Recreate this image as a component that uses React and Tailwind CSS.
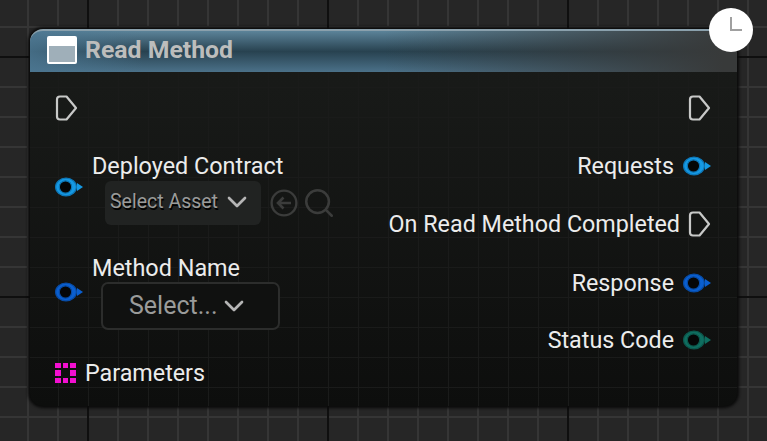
import { ChevronDown, Search } from "lucide-react";

function DataPin({ color, edge, hole = "#050606" }) {
  return (
    <svg width="28" height="20" viewBox="0 0 28 20" className="shrink-0">
      <ellipse cx="11" cy="10" rx="10.4" ry="8.9" fill={color} stroke={edge} strokeWidth="1.2" />
      <circle cx="10.5" cy="10" r="6.2" fill={hole} stroke={edge} strokeWidth="1.2" />
      <path d="M22 6 L28 10 L22 14 Z" fill={color} />
    </svg>
  );
}

function ExecPin() {
  return (
    <svg width="23" height="28" viewBox="0 0 23 28" className="shrink-0">
      <path
        d="M5 2.5 H11.5 L21 14 L11.5 25.5 H5 Q2 25.5 2 22.5 V5.5 Q2 2.5 5 2.5 Z"
        fill="none"
        stroke="#c8c9c8"
        strokeWidth="2.2"
        strokeLinejoin="round"
      />
    </svg>
  );
}

function ArrayPin() {
  const cells = [0, 1, 2, 3, 5, 6, 7, 8];
  return (
    <div className="grid grid-cols-3 grid-rows-3 gap-[2px] w-[21px] h-[21px] shrink-0">
      {[0, 1, 2, 3, 4, 5, 6, 7, 8].map((i) => (
        <div key={i} className={cells.includes(i) ? "bg-[#f20fd0]" : ""} />
      ))}
    </div>
  );
}

function BackIcon() {
  return (
    <svg width="28" height="28" viewBox="0 0 28 28" fill="none" stroke="#3b3c3b" strokeWidth="2.4">
      <circle cx="14" cy="14" r="12.4" />
      <path d="M21 14 H8 M13.5 8.5 L8 14 L13.5 19.5" strokeWidth="2.6" />
    </svg>
  );
}

function OutputRow({ label, children, className }) {
  return (
    <div className={`flex items-center justify-end ${className}`}>
      <span className="pt-[1px] text-[23.3px] leading-[28px] text-[#ececec]">{label}</span>
      {children}
    </div>
  );
}

export default function App() {
  return (
    <div
      className="
        w-[767px]
        h-[441px]
        overflow-hidden
        pt-[29px]
        pl-[30px]
        bg-[#262626]
        bg-[linear-gradient(to_right,#0f0f0f_2px,transparent_2px),linear-gradient(to_bottom,#0f0f0f_2px,transparent_2px),linear-gradient(to_right,#353535_2px,transparent_2px),linear-gradient(to_bottom,#353535_2px,transparent_2px)]
        bg-[size:240px_240px,240px_240px,30px_30px,30px_30px]
        bg-[position:87px_56px,87px_56px,27px_26px,27px_26px]
        font-['Roboto',sans-serif]
      "
    >
      <div
        className="
          relative
          w-[707px]
          h-[377px]
          rounded-[13px]
          bg-[#0f100f]
          bg-[linear-gradient(to_right,#1a1b1a_1px,transparent_1px),linear-gradient(to_bottom,#1a1b1a_1px,transparent_1px),linear-gradient(to_bottom,#1a1c1a,#0d0e0d)]
          bg-[size:30px_30px,30px_30px,100%_100%]
          bg-[position:-2px_-2px,-2px_-2px,0_0]
          shadow-[0_0_3px_2px_#0a0a0a]
        "
      >
        <div
          className="
            flex
            items-center
            h-[43px]
            pl-[17px]
            pb-[3px]
            gap-[8px]
            rounded-t-[13px]
            border-t-2
            border-[#8aa0ac]
            bg-[linear-gradient(to_right,rgba(75,118,145,0.8),rgba(0,0,0,0)_16%),linear-gradient(to_right,rgba(60,60,60,0)_50%,rgba(56,58,58,1)_98%),linear-gradient(to_bottom,#5b8399,#284250_50%,#4b7189)]
          "
        >
          <div className="w-[30px] h-[28px] shrink-0 border-2 border-white rounded-[2px] bg-[#9fafb9] flex flex-col">
            <div className="h-[8px] bg-white" />
          </div>
          <span className="text-[24.8px] leading-none font-bold text-[#bcbdbc]">
            Read Method
          </span>
        </div>

        <div className="flex justify-between">
          <div className="flex flex-col pl-[25px]">
            <div className="mt-[22px]">
              <ExecPin />
            </div>

            <div className="flex mt-[30px]">
              <div className="mt-[25px]">
                <DataPin color="#1599e4" edge="#0e78b8" />
              </div>
              <div className="-ml-[15px] flex flex-col">
                <span className="ml-[24px] text-[23.4px] leading-[28px] text-[#ececec]">Deployed Contract</span>
                <div className="flex items-center ml-[37px] mt-[1px]">
                  <div className="flex items-center w-[156px] h-[44px] pl-[5px] rounded-[6px] bg-[#212322]">
                    <span className="pb-[3px] text-[19.5px] text-[#9a9b9a] [text-shadow:1px_2px_0_#000]">Select Asset</span>
                    <ChevronDown size={32} strokeWidth={2} className="ml-[3px] -mt-[3px] text-[#b5b5b5]" />
                  </div>
                  <div className="ml-[9px]">
                    <BackIcon />
                  </div>
                  <Search size={34} strokeWidth={1.8} className="ml-[4px] text-[#3b3c3b]" />
                </div>
              </div>
            </div>

            <div className="flex mt-[29px]">
              <div className="mt-[28px]">
                <DataPin color="#0a5fd0" edge="#084da8" />
              </div>
              <div className="-ml-[15px] flex flex-col">
                <span className="ml-[24px] text-[23.4px] leading-[28px] text-[#ececec]">Method Name</span>
                <div className="flex items-center gap-[1px] pl-[26px] ml-[33px] w-[179px] h-[48px] rounded-[7px] border-2 border-[#2c2d2c] bg-[#101110]">
                  <span className="text-[25px] text-[#9a9b9a]">Select...</span>
                  <ChevronDown size={32} strokeWidth={2} className="text-[#b5b5b5]" />
                </div>
              </div>
            </div>

            <div className="flex items-center gap-[9px] mt-[29px]">
              <ArrayPin />
              <span className="text-[23.3px] leading-[28px] text-[#ececec]">Parameters</span>
            </div>
          </div>

          <div className="flex flex-col pr-[26px]">
            <div className="flex justify-end mt-[22px]">
              <ExecPin />
            </div>
            <OutputRow label="Requests" className="gap-[9px] mt-[29px]">
              <DataPin color="#1599e4" edge="#0e78b8" />
            </OutputRow>
            <OutputRow label="On Read Method Completed" className="gap-[8px] mt-[29px]">
              <ExecPin />
            </OutputRow>
            <OutputRow label="Response" className="gap-[9px] mt-[30px]">
              <DataPin color="#0a5fd0" edge="#084da8" />
            </OutputRow>
            <OutputRow label="Status Code" className="gap-[9px] mt-[28px]">
              <DataPin color="#0f6e60" edge="#0c584d" />
            </OutputRow>
          </div>
        </div>

        <div className="absolute -top-[21px] -right-[16px] w-[44px] h-[44px] rounded-full bg-white">
          <div className="absolute left-[21px] top-[9px] w-[2px] h-[14px] bg-[#a0a0a0]" />
          <div className="absolute left-[21px] top-[21px] w-[12px] h-[2px] bg-[#a0a0a0]" />
        </div>
      </div>
    </div>
  );
}
